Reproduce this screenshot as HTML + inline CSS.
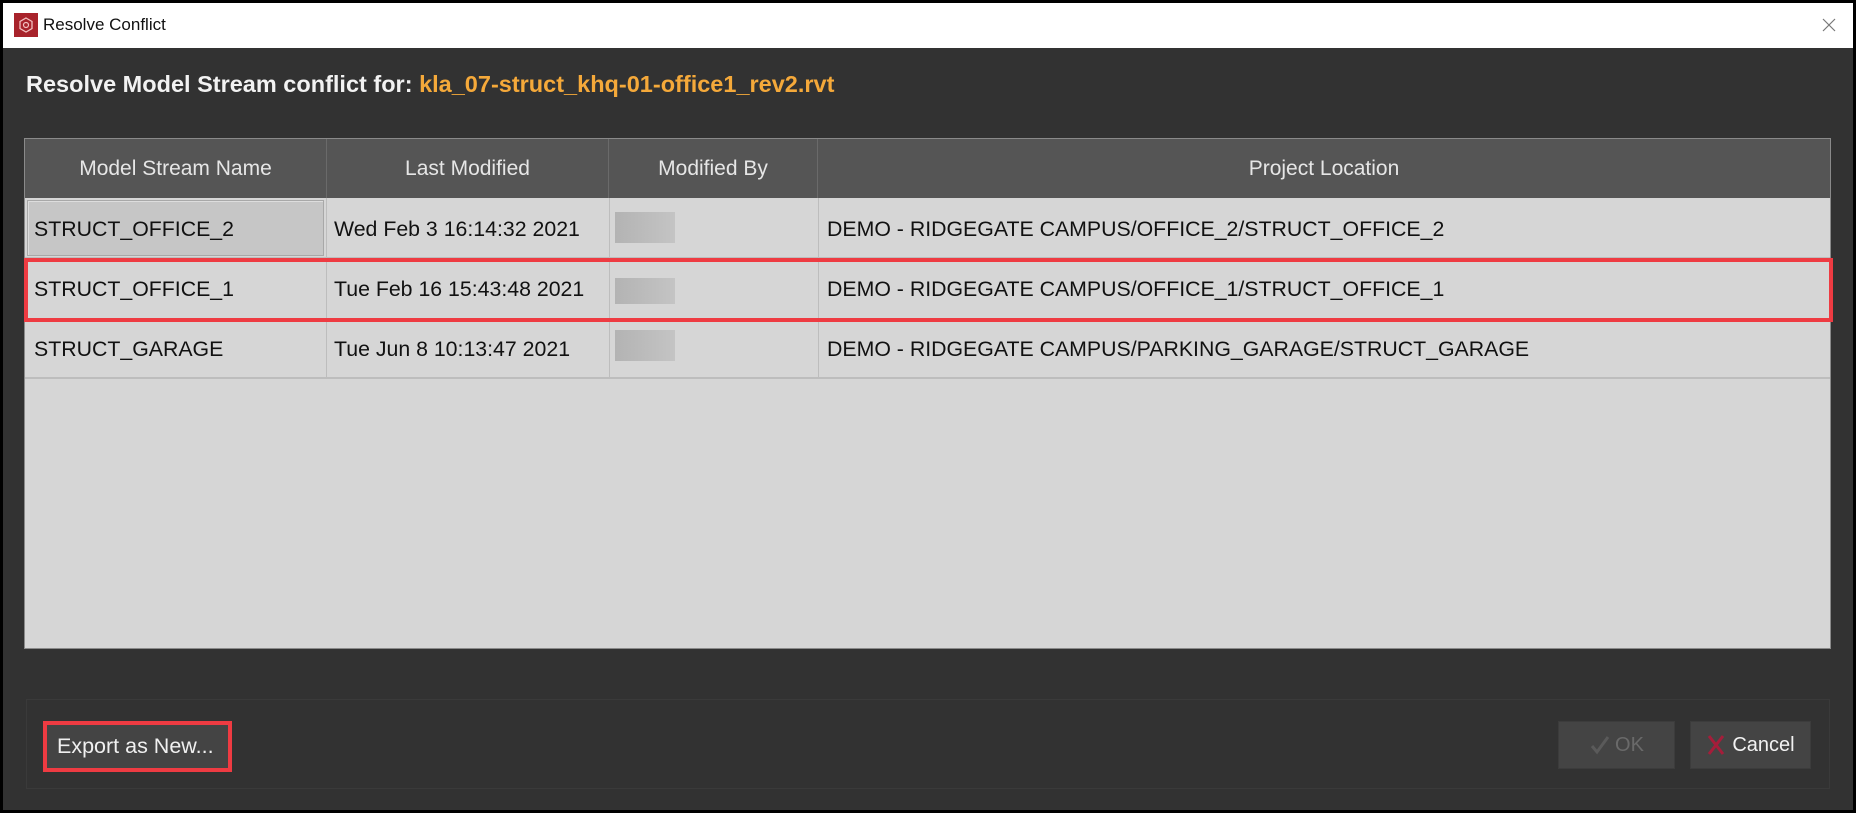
<!DOCTYPE html>
<html><head><meta charset="utf-8"><style>
*{margin:0;padding:0;box-sizing:border-box}
body{width:1856px;height:813px;background:#000;position:relative;overflow:hidden;font-family:"Liberation Sans",sans-serif}
.abs{position:absolute}
#win{left:3px;top:3px;width:1850px;height:807px;background:#323232}
#title{left:3px;top:3px;width:1850px;height:45px;background:#fff}
.cell{position:absolute;font-size:21.3px;color:#111;line-height:21px;white-space:nowrap}
.hdr{position:absolute;top:139px;height:59px;background:#555;color:#e6e6e6;font-size:21px;display:flex;align-items:center;justify-content:center;border-right:1px solid #6a6a6a}
.vl{position:absolute;width:1px;background:#bdbdbd;top:198px;height:180px}
.hl{position:absolute;height:1px;background:#bdbdbd;left:25px;width:1805px}
.blur{position:absolute;left:615px;width:60px;height:31px;background:linear-gradient(90deg,#b3b3b3,#c4c4c4)}
</style></head><body>
<div id="win" class="abs"></div>
<div id="title" class="abs"></div>
<div class="abs" style="left:14px;top:13px;width:24px;height:24px;background:#a8232b"></div>
<svg class="abs" style="left:18px;top:17px" width="16" height="16" viewBox="0 0 16 16"><polygon points="8,1 14,4.5 14,11.5 8,15 2,11.5 2,4.5" fill="none" stroke="#f2c0c0" stroke-width="1.3"/><circle cx="8" cy="8" r="2.5" fill="none" stroke="#f2c0c0" stroke-width="1.2"/></svg>
<div class="abs" style="left:43px;top:15px;font-size:17px;color:#111">Resolve Conflict</div>
<svg class="abs" style="left:1821px;top:17px" width="16" height="16"><path d="M2 2L14 14M14 2L2 14" stroke="#777" stroke-width="1.2"/></svg>
<div class="abs" style="left:26px;top:71px;font-size:23.5px;font-weight:bold;color:#f2f2f2;white-space:nowrap">Resolve Model Stream conflict for: <span style="color:#f5a93a">kla_07-struct_khq-01-office1_rev2.rvt</span></div>

<div class="abs" style="left:24px;top:138px;width:1807px;height:511px;background:#d6d6d6;border:1px solid #8a8a8a"></div>
<div class="hdr" style="left:25px;width:302px">Model Stream Name</div>
<div class="hdr" style="left:327px;width:282px">Last Modified</div>
<div class="hdr" style="left:609px;width:209px">Modified By</div>
<div class="hdr" style="left:818px;width:1012px;border-right:none">Project Location</div>
<div class="vl" style="left:326px"></div><div class="vl" style="left:609px"></div><div class="vl" style="left:818px"></div>
<div class="hl" style="top:257px"></div><div class="hl" style="top:321px"></div><div class="hl" style="top:377px;height:2px"></div>
<div class="abs" style="left:27px;top:200px;width:297px;height:56px;background:#c6c6c6;border:1px solid #a8a8a8;box-shadow:inset 1px 1px 0 #ddd"></div>

<div class="cell" style="left:34px;top:219px">STRUCT_OFFICE_2</div>
<div class="cell" style="left:334px;top:219px">Wed Feb 3 16:14:32 2021</div>
<div class="blur" style="top:212px"></div>
<div class="cell" style="left:827px;top:219px">DEMO - RIDGEGATE CAMPUS/OFFICE_2/STRUCT_OFFICE_2</div>

<div class="cell" style="left:34px;top:279px">STRUCT_OFFICE_1</div>
<div class="cell" style="left:334px;top:279px">Tue Feb 16 15:43:48 2021</div>
<div class="blur" style="top:278px;height:26px"></div>
<div class="cell" style="left:827px;top:279px">DEMO - RIDGEGATE CAMPUS/OFFICE_1/STRUCT_OFFICE_1</div>

<div class="cell" style="left:34px;top:339px">STRUCT_GARAGE</div>
<div class="cell" style="left:334px;top:339px">Tue Jun 8 10:13:47 2021</div>
<div class="blur" style="top:330px"></div>
<div class="cell" style="left:827px;top:339px">DEMO - RIDGEGATE CAMPUS/PARKING_GARAGE/STRUCT_GARAGE</div>

<div class="abs" style="left:24px;top:258px;width:1809px;height:64px;border:4px solid #ee3b42"></div>

<div class="abs" style="left:26px;top:699px;width:1804px;height:90px;border:1px solid #3a3a3a;background:#323232"></div>
<div class="abs" style="left:43px;top:721px;width:189px;height:51px;border:4px solid #ee3b42;background:#444;color:#f0f0f0;font-size:21.5px;display:flex;align-items:center;padding-left:10px;white-space:nowrap">Export as New...</div>
<div class="abs" style="left:1558px;top:721px;width:117px;height:48px;background:#444;border:1px solid #3c3c3c;color:#6a6a6a;font-size:20px;display:flex;align-items:center;justify-content:center"><svg width="22" height="22" viewBox="0 0 22 22" style="margin-right:4px"><path d="M3 12L8 18L19 3" stroke="#5a5a5a" stroke-width="3" fill="none"/></svg>OK</div>
<div class="abs" style="left:1690px;top:721px;width:121px;height:48px;background:#444;border:1px solid #3c3c3c;color:#f2f2f2;font-size:20px;display:flex;align-items:center;justify-content:center"><svg width="20" height="22" viewBox="0 0 20 22" style="margin-right:6px"><path d="M3 2L17 20M17 2L3 20" stroke="#a51d3a" stroke-width="3"/></svg>Cancel</div>
</body></html>
